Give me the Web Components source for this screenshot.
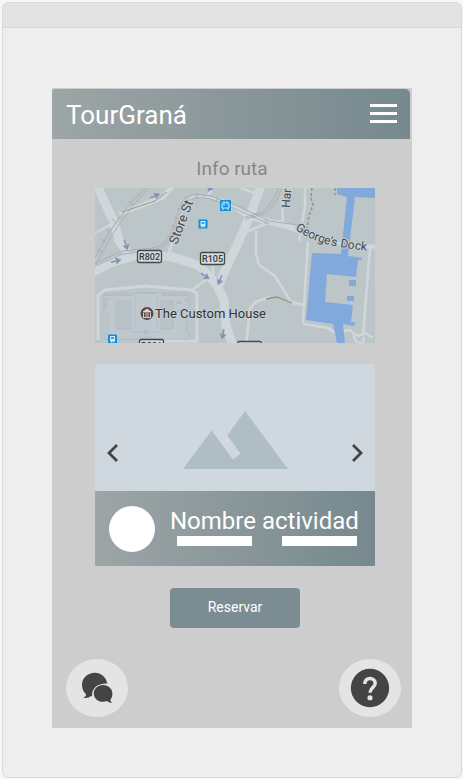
<!DOCTYPE html>
<html lang="es">
<head>
<meta charset="utf-8">
<meta name="viewport" content="width=device-width, initial-scale=1">
<title>TourGraná</title>
<style>
body { margin: 0; padding: 2px 1px 1px 2px; background: #f7f7f7; font-family: Roboto, "Liberation Sans", sans-serif; }
</style>
</head>
<body>
<window-frame>
  <tour-screen>
    <app-header slot="header">TourGraná</app-header>
    <h2 slot="title">Info ruta</h2>
    <route-map></route-map>
    <activity-card>Nombre actividad</activity-card>
    <action-button>Reservar</action-button>
    <round-button slot="tools" label="Chat">
      <svg width="32" height="32" viewBox="0 0 32 32"><path fill="#444" d="M14 .8C6.800 .8 1 6 1 12.800c0 4 1.500 7.200 4 9.500.4 1.600-1 2.700-2.700 3.500 3.300.7 6-.3 7.800-1.800l1 .3C10.500 16.500 16 11.300 26.300 11.500 25 5 20 .8 14 .8z"/><path fill="#444" d="M22 13c-5.200 0-9.200 3.700-9.200 8.400s4 8.400 9.200 8.400c1.400 0 2.700-.2 3.900-.7 1.500 1.200 3.300 1.800 5.600 1.500-1.500-.7-2.300-1.900-2-3.200 1.200-1.500 1.900-3.500 1.900-6C31.400 16.700 27.200 13 22 13z"/></svg>
    </round-button>
    <round-button slot="tools" label="Ayuda">
      <svg width="46" height="46" viewBox="0 0 24 24"><circle cx="12" cy="12" r="10" fill="#444"/><circle cx="12" cy="17.100" r="1.350" fill="#e3e4e6"/><path d="M9.300 9.900c0-1.900 1.200-2.900 2.700-2.900s2.700 1.100 2.700 2.600c0 2-2.700 2.400-2.700 4.900" fill="none" stroke="#e3e4e6" stroke-width="1.800"/></svg>
    </round-button>
  </tour-screen>
</window-frame>
<script>
function define(name, html, setup) {
  const template = document.createElement('template');
  template.innerHTML = html;
  customElements.define(name, class extends HTMLElement {
    constructor() {
      super();
      this.attachShadow({ mode: 'open' }).append(template.content.cloneNode(true));
    }
    connectedCallback() { if (setup) setup(this); }
  });
}

define('window-frame', `
<style>
:host { display: block; border: 1px solid #d9d9d9; border-radius: 6px; background: #eee; overflow: hidden; }
.bar { height: 24px; background: #e3e3e3; border-bottom: 1px solid #d9d9d9; }
.body { padding: 60px 49px 49px; }
</style>
<div class="bar"></div><div class="body"><slot></slot></div>`);

define('tour-screen', `
<style>
:host { display: block; background: #cdcdcd; padding: 1px 0 11px; }
::slotted(h2) { margin: 18px 0 8px; text-align: center; font-size: 19px; line-height: 23px; font-weight: 400; color: #888; }
main { display: flex; flex-direction: column; align-items: stretch; padding: 0 37px 0 43px; }
footer { display: flex; justify-content: space-between; padding: 31px 11px 0 14px; }
</style>
<slot name="header"></slot>
<slot name="title"></slot>
<main><slot></slot></main>
<footer><slot name="tools"></slot></footer>`);

define('app-header', `
<style>
:host { display: flex; align-items: center; justify-content: space-between; height: 50px; margin-right: 2px; padding: 0 13px 0 14px; box-sizing: border-box; border-radius: 3px 5px 0 0; background: linear-gradient(90deg, #9da5a6, #76898e); color: #fff; }
h1 { margin: 0; padding-top: 2px; font-size: 26px; line-height: 32px; font-weight: 400; }
button { display: block; padding: 0; border: 0; background: none; }
svg { display: block; }
</style>
<h1><slot></slot></h1>
<button aria-label="Menú"><svg width="27" height="20" viewBox="0 0 27 20"><path fill="#fff" d="M0 0h27v3H0zM0 8h27v3H0zM0 16h27v3H0z"/></svg></button>`);

define('route-map', `
<style>
:host { display: block; height: 155px; margin-bottom: 21px; }
svg { display: block; width: 100%; height: 100%; font-family: Roboto, "Liberation Sans", sans-serif; }
</style>
<svg viewBox="0 0 280 155" preserveAspectRatio="xMidYMid slice" role="img" aria-label="Mapa de la ruta">
<defs>
<g id="arrow"><path d="M-5 0H1" stroke="#8390b4" stroke-width="1.500"/><path d="M0 -3 5 0 0 3 1 0z" stroke="#8390b4" stroke-width=".6" fill="#8390b4"/></g>
<g id="bus"><rect x="-4.500" y="-4.500" width="9" height="9" rx="1" fill="#0d91df"/><path d="M-2.500 -3h5v5.500h-1v1h-1v-1h-1v1h-1v-1h-1z" fill="#d7e8f0"/><path d="M-1.500 -1.800h3v1.600h-3z" fill="#0d91df"/></g>
<path id="dock" d="M200 41Q212 50 225 54 240 60 285 64"/>
</defs>
<rect width="280" height="155" fill="#bcc5c8"/>
<g fill="none" stroke="#cfd7da" stroke-linejoin="round">
<path stroke-width="9" d="M2 -2 19 34 24 53 33 65"/>
<path stroke-width="5" d="M24 26 46 18 68 9 77 -1"/>
<path stroke-width="2" d="M0 45 17 36"/>
<path stroke-width="9" d="M-2 84 18 74 43 67 78 69 105 78 122 97 129 112 131 137 138 158"/>
<path stroke-width="9" d="M166 -2 156 25 143 55 133 76 122 101"/>
<path stroke-width="2.500" d="M73 67 80 47 88 18 99 8 128 12 155 27 200 38M112 9 119 -2M188 34 187 14M152 44 172 35 188 33M161 43 161 66 164 77 180 88 196 114 209 117M210 -2 210 18 204 53M111 92 97 102M117 78 119 86M213 53 208 133 209 136 233 140 240 145 254 142 263 148 270 145 278 150M275 60 268 147M175 109 160 114 155 121 151 157M197 115 209 117"/>
<path stroke-width="4" d="M125 12 143 22 155 30 195 40 240 55 282 59"/>
<path stroke-width="2.500" d="M258 147 262 155 268 155 269 149M145 0 160 5"/>
<path stroke-width="3" d="M3 152V107L10 102 50 98 96 102 102 105V153H62"/>
</g>
<g fill="none" stroke="#a8b0b4" stroke-width="1">
<path d="M52 -2Q22 26 0 70M55 -1Q25 28 1 76"/>
<path d="M-2 76 28 63 58 60Q72 58 78 40T87 14Q93 3 116 8L145 19 174 33 203 37M-2 79 28 66 60 62Q74 59 80 41T89 17Q97 6 116 11L143 22 174 36"/>
<path d="M184 -1Q178 15 168 24L150 29M187 -1Q181 18 169 26L150 31"/>
<path d="m42 5 4 4M33 13l5 4M25 22l5 4M17 31l5 4M11 41l5 3M6 51l5 3M2 61l5 3M72 47l7 3M76 38l6 2M79 29l6 2M82 20l6 2M89 9l4 4M102 5v6M123 9l-2 5M136 14l-2 5M159 25l-2 5M172 31l-2 5"/>
</g>
<path d="M9 105H94V125H91V145H94V151H56V149H44V151H9V146H13V125H9z" fill="#bfc8ce" stroke="#b2bcc6" stroke-width="1"/>
<g fill="#b9c2c7" stroke="#b2bcc6" stroke-width="1"><path d="M21 113H36V141H21zM66 113H78V141H66z"/></g>
<path fill="#b3bdc8" d="M10 106H38V108H10zM67 106H93V108H67zM41 104H62V106H41zM10 110h3v3h-3zM90 110h3v3h-3zM9 114h3v6H9zM82 122h5v3h-5zM82 113h4v3h-4z"/>
<path fill="none" stroke="#b2bcc6" d="M40 109V140M62 109V140M36 144H66"/><circle cx="51" cy="144" r="2.500" fill="#b2bcc6"/>
<g fill="#81a9dc">
<path d="M242 0H280V10L260 9 253 68 267 70V72H263L261 89 232 86 230 114 258 117 256 134H260L259 138 248 136 250 155H242L238 136 211 132 217 65 246 66 252 9 242 6z"/>
<path d="M254 92H261V98H254zM252 108H259V113H252z"/>
</g>
<path fill="none" stroke="#939477" stroke-width="1.300" d="M171 111 182 109 197 115"/>
<path fill="none" stroke="#94957a" stroke-width="1.500" stroke-dasharray="3 2" d="M217 0 216 10 218 17 214 28 212 40M240 0V7"/>
<path fill="none" stroke="#989a85" stroke-width="1" d="M27 24 60 13 72 4"/>
<use href="#arrow" transform="translate(60 8) rotate(-22)"/>
<use href="#arrow" transform="translate(31 57) rotate(70)"/>
<use href="#arrow" transform="translate(21 73) rotate(-14)"/>
<use href="#arrow" transform="translate(110 88) rotate(35)"/>
<use href="#arrow" transform="translate(125 92) rotate(110)"/>
<use href="#arrow" transform="translate(128 146) rotate(100)"/>
<use href="#arrow" transform="translate(116 -1) rotate(125)"/>
<use href="#bus" transform="translate(108 36)"/>
<use href="#bus" transform="translate(17.500 151)"/>
<rect x="125" y="12" width="11" height="11" rx="1" fill="#0d91df"/><path d="M127 15h7v5h-7zM129 13v2M132 13v2M128 20v2M133 20v2" stroke="#d7e8f0" fill="none"/><path d="M128 17h2M132 17h1" stroke="#d7e8f0"/>
<g fill="#d3dbde" stroke="#454a4d" stroke-width="1.300"><rect x="42.500" y="62.500" width="24" height="12" rx="2"/><rect x="105.500" y="64.500" width="24" height="12" rx="2"/><rect x="44.500" y="151.500" width="24" height="12" rx="2"/><rect x="142.500" y="153.500" width="24" height="12" rx="2"/></g>
<g fill="#34383a" font-size="9" font-weight="500" text-anchor="middle"><text x="54.500" y="72">R802</text><text x="117.500" y="74">R105</text><text x="56.500" y="161">R801</text></g>
<g fill="#44494c" stroke="#c7cfd2" stroke-width="2" paint-order="stroke">
<text font-size="13" transform="translate(82 57) rotate(-69)">Store St</text>
<text font-size="12" transform="translate(195 20) rotate(-86)">Harl</text>
<text font-size="12"><textPath href="#dock">George’s Dock</textPath></text>
</g>
<circle cx="52" cy="125.500" r="6.500" fill="#594743"/><path d="M48 124 52 121 56 124zM48.500 125v4M51 125v4M53 125v4M55.500 125v4M48 129.500h8" fill="#ded9d7" stroke="#ded9d7" stroke-width=".9"/>
<text x="60" y="130" font-size="13" fill="#303436" stroke="#c7cfd2" stroke-width="2" paint-order="stroke">The Custom House</text>
</svg>`);

define('activity-card', `
<style>
:host { display: block; margin-bottom: 22px; border-radius: 4px 4px 0 0; overflow: hidden; color: #fff; }
.photo { height: 127px; background: #cfd8de; display: grid; grid-template-columns: 1fr 105px 1fr; align-items: end; padding: 0 12px 22px; box-sizing: border-box; }
button { display: block; padding: 0 0 7px; border: 0; background: none; justify-self: start; }
button:last-child { justify-self: end; }
svg { display: block; }
.info { height: 75px; box-sizing: border-box; display: flex; gap: 15px; padding: 15px 14px 0; background: linear-gradient(90deg, #9da5a6, #76898e); }
.avatar { flex: none; width: 46px; height: 46px; border-radius: 50%; background: #fff; }
.text { flex: 1; }
h3 { margin: 0; font-size: 24px; line-height: 30px; font-weight: 400; white-space: nowrap; }
.lines { display: flex; justify-content: space-between; padding: 0 4px 0 7px; }
.lines span { width: 75px; height: 10px; background: #fff; }
</style>
<div class="photo">
<button aria-label="Anterior"><svg width="12" height="18" viewBox="0 0 12 18"><path d="M10 1 2 9l8 8" fill="none" stroke="#444" stroke-width="2.800"/></svg></button>
<svg width="105" height="58" viewBox="0 0 105 58"><path fill="#afbdc4" d="M0 58 28.500 19.500 50 48.500 57.500 42.500 44.300 24.500 62 0 105 58z"/></svg>
<button aria-label="Siguiente"><svg width="12" height="18" viewBox="0 0 12 18"><path d="m2 1 8 8-8 8" fill="none" stroke="#444" stroke-width="2.800"/></svg></button>
</div>
<div class="info"><div class="avatar"></div><div class="text"><h3><slot></slot></h3><div class="lines"><span></span><span></span></div></div></div>`);

define('action-button', `
<style>
:host { display: block; align-self: center; }
button { display: block; width: 130px; height: 40px; padding: 0 0 2px; border: 0; border-radius: 4px; background: #7b8d93; color: #fff; font: 400 14px/20px Roboto, "Liberation Sans", sans-serif; }
</style>
<button><slot></slot></button>`);

define('round-button', `
<style>
:host { display: block; }
button { display: grid; place-items: center; width: 62px; height: 58px; padding: 0; border: 0; border-radius: 50%; background: #e3e4e6; }
</style>
<button><slot></slot></button>`, el => el.shadowRoot.querySelector('button').setAttribute('aria-label', el.getAttribute('label')));
</script>
</body>
</html>
